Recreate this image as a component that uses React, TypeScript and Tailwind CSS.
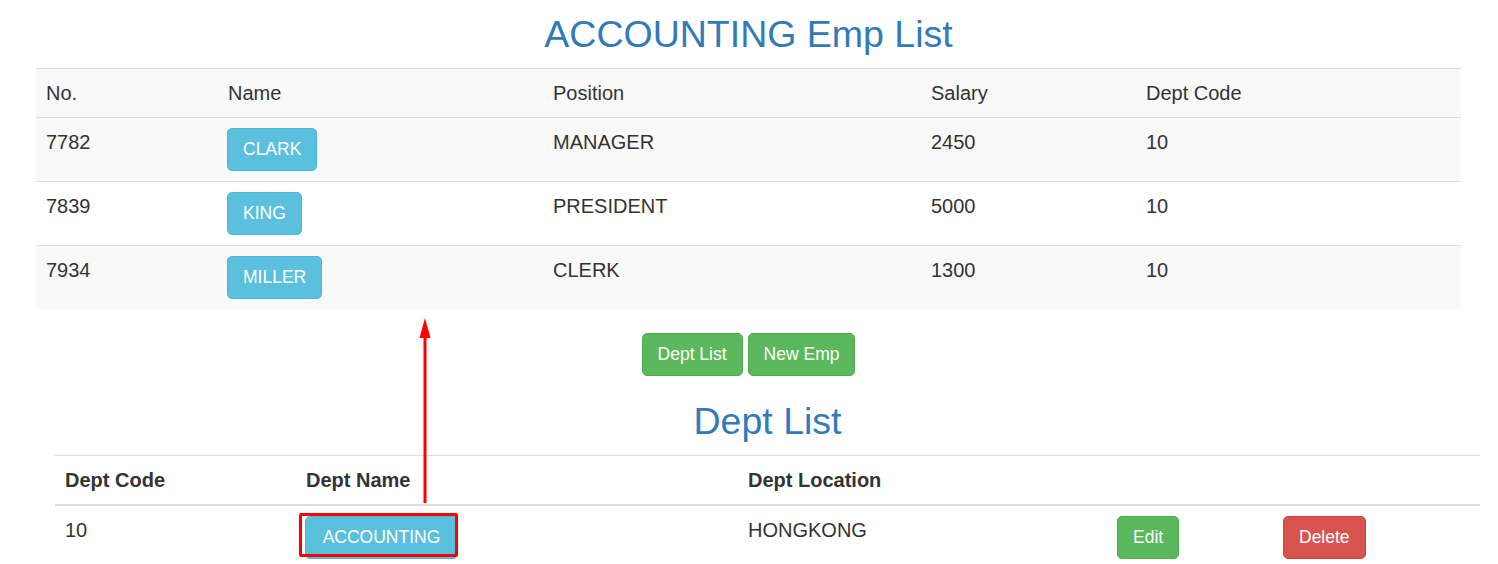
import React from "react";

type BtnKind = "info" | "success" | "danger";

const btnColors: Record<BtnKind, string> = {
  info: "bg-[#5bc0de] border-[#46b8da]",
  success: "bg-[#5cb85c] border-[#4cae4c]",
  danger: "bg-[#d9534f] border-[#d43f3a]",
};

function Btn({ kind, children, extra = "" }: { kind: BtnKind; children: React.ReactNode; extra?: string }) {
  return (
    <button
      className={`inline-flex h-[43px] items-center justify-center rounded-[5px] border px-[15px] text-[17.5px] leading-none text-white ${btnColors[kind]} ${extra}`}
    >
      {children}
    </button>
  );
}

const emps = [
  { no: "7782", name: "CLARK", pos: "MANAGER", sal: "2450", dept: "10" },
  { no: "7839", name: "KING", pos: "PRESIDENT", sal: "5000", dept: "10" },
  { no: "7934", name: "MILLER", pos: "CLERK", sal: "1300", dept: "10" },
];

const topCols = "grid grid-cols-[182px_325px_378px_215px_325px]";
const botCols = "grid grid-cols-[241px_442px_369px_166px_207px]";

export default function App() {
  return (
    <div
      className="relative min-h-[564px] w-full bg-white text-[20px] leading-[28px] text-[#333]"
      style={{ fontFamily: '"Liberation Sans", Arial, sans-serif' }}
    >
      {/* Emp list section */}
      <div className="ml-[36px] w-[1425px] pt-[14px]">
        <h1 className="mb-[14px] h-[40px] text-center text-[37.5px] leading-[40px] text-[#337ab7]">
          ACCOUNTING Emp List
        </h1>
        <div className="border-t border-[#ddd]">
          <div className={`${topCols} bg-[#f9f9f9]`}>
            {["No.", "Name", "Position", "Salary", "Dept Code"].map((h) => (
              <div key={h} className="px-[10px] py-[10px]">
                {h}
              </div>
            ))}
          </div>
          {emps.map((e, i) => (
            <div
              key={e.no}
              className={`${topCols} border-t border-[#ddd] ${i % 2 === 0 ? "bg-[#f9f9f9]" : "bg-white"}`}
            >
              <div className="px-[10px] py-[10px]">{e.no}</div>
              <div className="py-[10px] pl-[9px] pr-[10px]">
                <Btn kind="info">{e.name}</Btn>
              </div>
              <div className="px-[10px] py-[10px]">{e.pos}</div>
              <div className="px-[10px] py-[10px]">{e.sal}</div>
              <div className="px-[10px] py-[10px]">{e.dept}</div>
            </div>
          ))}
        </div>
        <div className="mt-[24px] flex justify-center gap-[5px]">
          <Btn kind="success">Dept List</Btn>
          <Btn kind="success">New Emp</Btn>
        </div>
      </div>

      {/* Dept list section */}
      <div className="ml-[55px] w-[1425px]">
        <h1 className="mt-[25px] h-[40px] text-center text-[37.5px] leading-[40px] text-[#337ab7]">
          Dept List
        </h1>
        <div className="mt-[14px] border-t border-[#ddd]">
          <div className={`${botCols} border-b-2 border-[#ddd] font-bold`}>
            {["Dept Code", "Dept Name", "Dept Location", "", ""].map((h, i) => (
              <div key={i} className="px-[10px] py-[10px]">
                {h}
              </div>
            ))}
          </div>
          <div className={botCols}>
            <div className="px-[10px] py-[10px]">10</div>
            <div className="py-[10px] pl-[9px] pr-[10px]">
              <span className="relative inline-block">
                <Btn kind="info" extra="w-[153px]">ACCOUNTING</Btn>
                <span className="pointer-events-none absolute bottom-[2px] left-[-6px] right-0 top-[-3px] rounded-[2px] border-[3px] border-[#ff0000]" />
              </span>
            </div>
            <div className="px-[10px] py-[10px]">HONGKONG</div>
            <div className="px-[10px] py-[10px]">
              <Btn kind="success">Edit</Btn>
            </div>
            <div className="px-[10px] py-[10px]">
              <Btn kind="danger">Delete</Btn>
            </div>
          </div>
        </div>
      </div>

      {/* Annotation arrow */}
      <svg
        className="pointer-events-none absolute left-[417px] top-[316px]"
        width="16"
        height="190"
        viewBox="0 0 16 190"
      >
        <polygon points="8,2 2.5,22 13.5,22" fill="#ff0000" />
        <rect x="6.5" y="20" width="3" height="167" fill="#ff0000" />
      </svg>
    </div>
  );
}
